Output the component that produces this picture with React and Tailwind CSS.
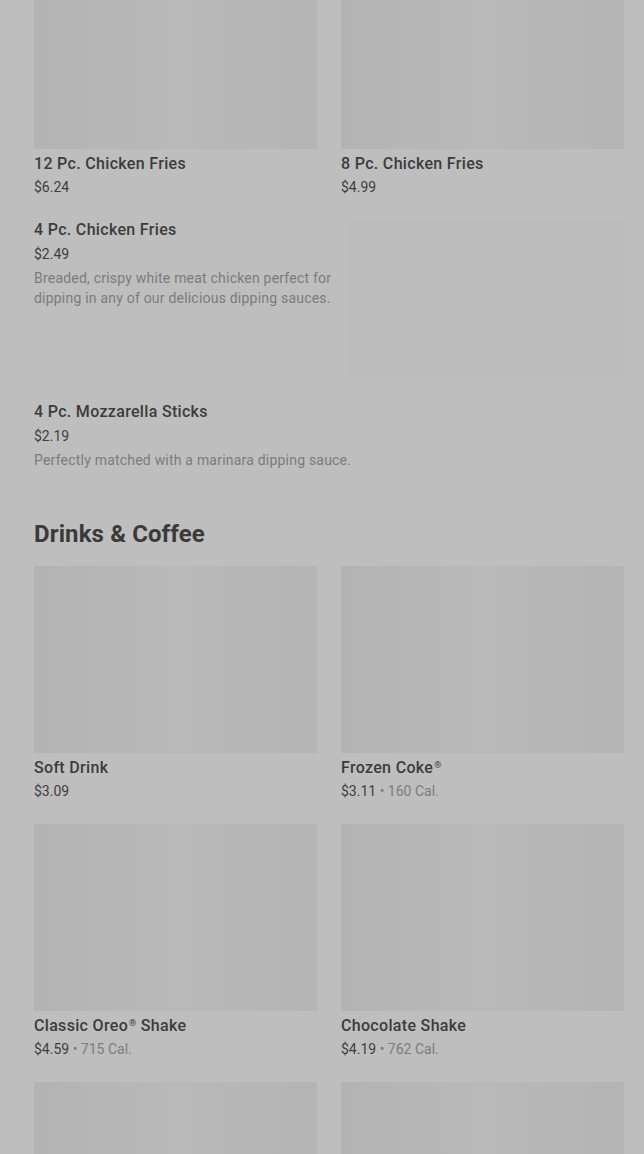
import React from "react";

const font = { fontFamily: "Roboto, 'Liberation Sans', sans-serif" };

// shimmer placeholder for item photos
function Placeholder({ className }) {
  return (
    <div
      className={
        "w-full bg-linear-to-r from-[#b3b3b3] via-[#b9b9b9] to-[#b4b4b4] " +
        className
      }
    />
  );
}

function Card({ name, price, cal, imgClass = "h-[187px]" }) {
  return (
    <div className="flex flex-col">
      <Placeholder className={imgClass} />
      <div className="mt-[3px] text-base leading-6 font-medium tracking-[0.02em] text-[#3c3c3c]">
        {name}
      </div>
      <div className="mt-[1px] text-sm leading-5 text-[#3e3e3e]">
        {price}
        {cal && <span className="text-[#7c7c7c]"> • {cal}</span>}
      </div>
    </div>
  );
}

function ListItem({ name, price, desc, image }) {
  return (
    <div className="flex">
      <div className="w-[314px] pr-2">
        <div className="text-base leading-5 font-medium tracking-[0.02em] text-[#3c3c3c]">
          {name}
        </div>
        <div className="mt-1 text-sm leading-5 text-[#3e3e3e]">{price}</div>
        <div className="mt-1 text-sm leading-5 tracking-[0.015em] text-[#7b7b7b]">
          {desc}
        </div>
      </div>
      {image && <div className="ml-auto h-[156px] w-[276px] bg-[#bbbbbb]" />}
    </div>
  );
}

function Reg() {
  return <sup className="text-[9px] -top-[5px] ml-[1px]">®</sup>;
}

export default function App() {
  return (
    <div className="min-h-screen overflow-hidden bg-[#bebebe]" style={font}>
      <div className="ml-[34px] w-[590px]">
        <div className="grid grid-cols-2 gap-x-6">
          <Card name="12 Pc. Chicken Fries" price="$6.24" imgClass="h-[149px]" />
          <Card name="8 Pc. Chicken Fries" price="$4.99" imgClass="h-[149px]" />
        </div>

        <div className="mt-[23px]">
          <ListItem
            name="4 Pc. Chicken Fries"
            price="$2.49"
            desc="Breaded, crispy white meat chicken perfect for dipping in any of our delicious dipping sauces."
            image
          />
        </div>

        <div className="mt-[26px]">
          <div className="text-base leading-5 font-medium tracking-[0.02em] text-[#3c3c3c]">
            4 Pc. Mozzarella Sticks
          </div>
          <div className="mt-1 text-sm leading-5 text-[#3e3e3e]">$2.19</div>
          <div className="mt-1 text-sm leading-5 tracking-[0.015em] text-[#7b7b7b]">
            Perfectly matched with a marinara dipping sauce.
          </div>
        </div>

        <h2 className="mt-[48px] text-2xl leading-8 font-bold tracking-[0.005em] text-[#3a3a3a]">
          Drinks &amp; Coffee
        </h2>

        <div className="mt-[16px] grid grid-cols-2 gap-x-6 gap-y-[23px]">
          <Card name="Soft Drink" price="$3.09" />
          <Card
            name={
              <>
                Frozen Coke
                <Reg />
              </>
            }
            price="$3.11"
            cal="160 Cal."
          />
          <Card
            name={
              <>
                Classic Oreo
                <Reg /> Shake
              </>
            }
            price="$4.59"
            cal="715 Cal."
          />
          <Card name="Chocolate Shake" price="$4.19" cal="762 Cal." />
          <Card name="Vanilla Shake" price="$4.19" cal="685 Cal." />
          <Card name="Strawberry Shake" price="$4.19" cal="690 Cal." />
        </div>
      </div>
    </div>
  );
}
